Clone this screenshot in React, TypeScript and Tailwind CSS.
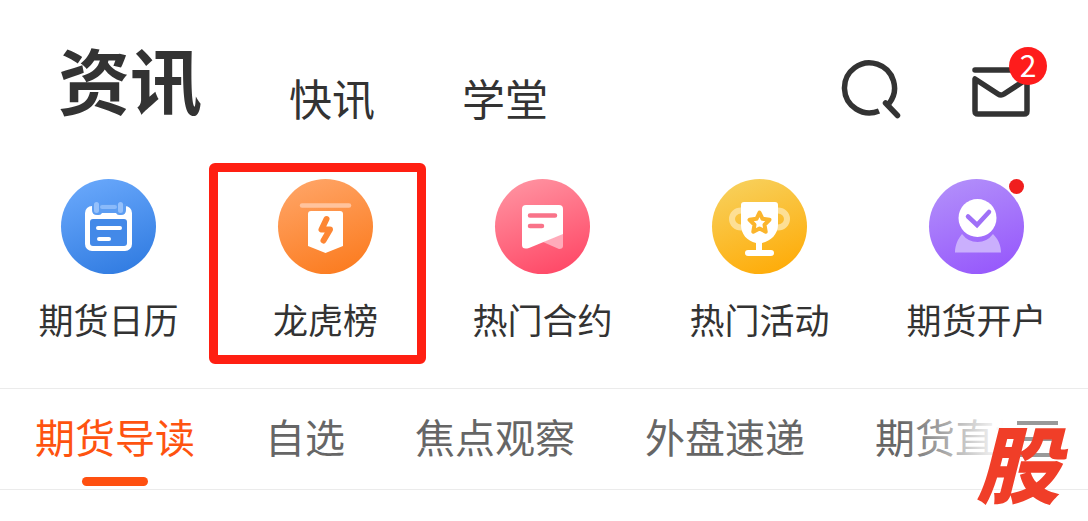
import type { ReactNode } from "react";

type Shortcut = {
  label: string;
  bg: string;
  icon: ReactNode;
  dot?: boolean;
  marked?: boolean;
};

const CalendarIcon = (
  <>
    <rect x="24" y="27" width="47" height="45" rx="7" fill="#fff" />
    <path d="M31 25v6q0 5 5 5h2q2 0 3-2h14q1 2 3 2h2q5 0 5-5v-6z" fill="#5c9df2" />
    <rect x="29" y="40" width="37" height="27" rx="3" fill="#4389e8" />
    <path d="M37 49h22M38 60h10" stroke="#fff" strokeWidth="4" />
    <path d="M35.5 25.5v6M59.500 25.5v6" stroke="#94c0fb" strokeWidth="5" />
    <path d="M41 28h13" stroke="#8abafa" strokeWidth="4" />
  </>
);

const RankIcon = (
  <>
    <path d="M24 26.5h47" stroke="#ffc39d" strokeWidth="4.5" />
    <path d="M33 32h29q3 0 3 3v32l-17.5 7-17.5-7V35q0-3 3-3z" fill="#fff" />
    <path d="M48.5 40l-5 10.500h8.500l-6.500 11" fill="none" stroke="#fd8634" strokeWidth="6" />
  </>
);

const ContractIcon = (
  <>
    <path d="M48 63l20-9v13q0 3-4 3z" fill="#ffabba" />
    <path d="M31 26h33q4 0 4 4v25L34 69q-7 2-7-3V30q0-4 4-4z" fill="#fff" />
    <path d="M35 36.5h25M35 47h12" stroke="#f97389" strokeWidth="4.5" />
  </>
);

const TrophyIcon = (
  <>
    <g fill="none" stroke="#fddf95" strokeWidth="6">
      <ellipse cx="29" cy="40" rx="9" ry="8.5" />
      <ellipse cx="66" cy="40" rx="9" ry="8.5" />
    </g>
    <path
      d="M32 23h31q3 0 3 3v20c0 9-7 16-16 18v7h9a3 3 0 0 1 0 6H36a3 3 0 0 1 0-6h8v-7c-9-2-15-9-15-18V26q0-3 3-3z"
      fill="#fff"
    />
    <path
      d="M47.5 33.5l3 6.300 7 1-5 4.900 1.200 7-6.200-3.300-6.200 3.300 1.200-7-5-4.900 7-1z"
      fill="#fff"
      stroke="#fbb52c"
      strokeWidth="4"
    />
  </>
);

const AccountIcon = (
  <>
    <path d="M26 73.5C26 66 29 60 33 55q6 8 15.500 8T64 55c5 5 8 11 8 18.500z" fill="#caaffd" />
    <circle cx="48.5" cy="39" r="19" fill="#fff" />
    <path d="M39 37.5l9 8.500 12-13" fill="none" stroke="#9f70f7" strokeWidth="4.5" strokeLinejoin="miter" />
  </>
);

const SHORTCUTS: Shortcut[] = [
  { label: "期货日历", bg: "from-[#6dabfd] to-[#2c78df]", icon: CalendarIcon },
  { label: "龙虎榜", bg: "from-[#ffa76b] to-[#fb7819]", icon: RankIcon, marked: true },
  { label: "热门合约", bg: "from-[#ff98a5] to-[#ff4161]", icon: ContractIcon },
  { label: "热门活动", bg: "from-[#f7d362] to-[#ffa800]", icon: TrophyIcon },
  { label: "期货开户", bg: "from-[#b493fa] to-[#9453fc]", icon: AccountIcon, dot: true },
];

const TABS = ["期货导读", "自选", "焦点观察", "外盘速递", "期货直播"];

function Header() {
  return (
    <header className="flex items-end justify-between pt-[30px] pr-[57px] pl-[58px] text-[#333]">
      <nav className="flex items-end gap-[87px]">
        <h1 className="text-[72px] leading-[96px] font-bold whitespace-nowrap">资讯</h1>
        <a href="#flash" className="text-[43px] leading-[58px] whitespace-nowrap">
          快讯
        </a>
        <a href="#school" className="text-[43px] leading-[58px] whitespace-nowrap">
          学堂
        </a>
      </nav>
      <div className="mb-[7px] flex gap-[70px]">
        <button type="button" aria-label="搜索">
          <svg viewBox="0 0 60 60" className="size-[60px]" fill="none" stroke="#333" strokeWidth="5.5">
            <path d="M48 44.5A25 25 0 1 0 38 52" />
            <path d="M44.5 44L56.5 56.5" strokeLinecap="round" />
          </svg>
        </button>
        <button type="button" aria-label="消息" className="relative">
          <svg
            viewBox="0 0 60 60"
            className="size-[60px]"
            fill="none"
            stroke="#333"
            strokeWidth="5.5"
            strokeLinecap="round"
            strokeLinejoin="round"
          >
            <path d="M4 11h40" />
            <path d="M4 20v32q0 3 3 3h46q3 0 3-3V20L33 35q-3 2-6 0z" />
          </svg>
          <span className="absolute -top-3 -right-4 h-[38px] w-[38px] rounded-full bg-[#fe1c1c] text-center text-[30px] leading-[34px] text-white">
            2
          </span>
        </button>
      </div>
    </header>
  );
}

function Shortcuts() {
  return (
    <section className="grid grid-cols-5 pt-[37px] pr-[3px] pb-6">
      {SHORTCUTS.map(({ label, bg, icon, dot, marked }) => (
        <div key={label} className="relative">
          <a href="#shortcut" className="flex flex-col items-center pt-4 pb-[21px]">
            <span className={`relative size-[95px] rounded-full bg-linear-[160deg] ${bg}`}>
              <svg viewBox="0 0 95 95" className="size-full" strokeLinecap="round" strokeLinejoin="round">
                {icon}
              </svg>
              {dot && <span className="absolute top-0 right-0 size-[15px] rounded-full bg-[#f01e1e]" />}
            </span>
            <span className="mt-[21px] text-[35px] leading-[48px] whitespace-nowrap text-[#333]">{label}</span>
          </a>
          {marked && (
            <span className="pointer-events-none absolute inset-y-0 right-2 -left-2 rounded-md border-9 border-[#ff1f12]" />
          )}
        </div>
      ))}
    </section>
  );
}

function Tabs() {
  return (
    <div className="relative border-y border-[#ebebeb]">
      <nav className="flex gap-[70px] overflow-hidden pt-[17px] pb-[3px] pl-[35px]">
        {TABS.map((tab, i) => (
          <a
            key={tab}
            href="#tab"
            className={`flex shrink-0 flex-col items-center gap-[11px] text-[40px] leading-[60px] ${
              i === 0 ? "text-[#fe5310]" : "text-[#666]"
            }`}
          >
            {tab}
            {i === 0 && <span className="h-[9px] w-[66px] rounded-full bg-[#ff5010]" />}
          </a>
        ))}
      </nav>

      {/* Fade + menu over the end of the scrolling tabs */}
      <div className="absolute inset-y-0 right-0 flex w-[188px] items-center justify-end bg-linear-to-r from-white/0 to-white to-55% pr-[30px]">
        <button type="button" aria-label="全部栏目" className="flex flex-col gap-3">
          <span className="h-1 w-[41px] bg-[#999]" />
          <span className="h-1 w-[41px] bg-[#999]" />
          <span className="h-1 w-[41px] bg-[#999]" />
        </button>
      </div>
      <span className="absolute top-8 right-7 text-[84px] leading-[80px] font-black text-[#f03e28] italic">股</span>
    </div>
  );
}

export default function App() {
  return (
    <main className="min-h-screen overflow-hidden bg-white font-['Noto_Sans_CJK_SC',sans-serif]">
      <Header />
      <Shortcuts />
      <Tabs />
    </main>
  );
}
